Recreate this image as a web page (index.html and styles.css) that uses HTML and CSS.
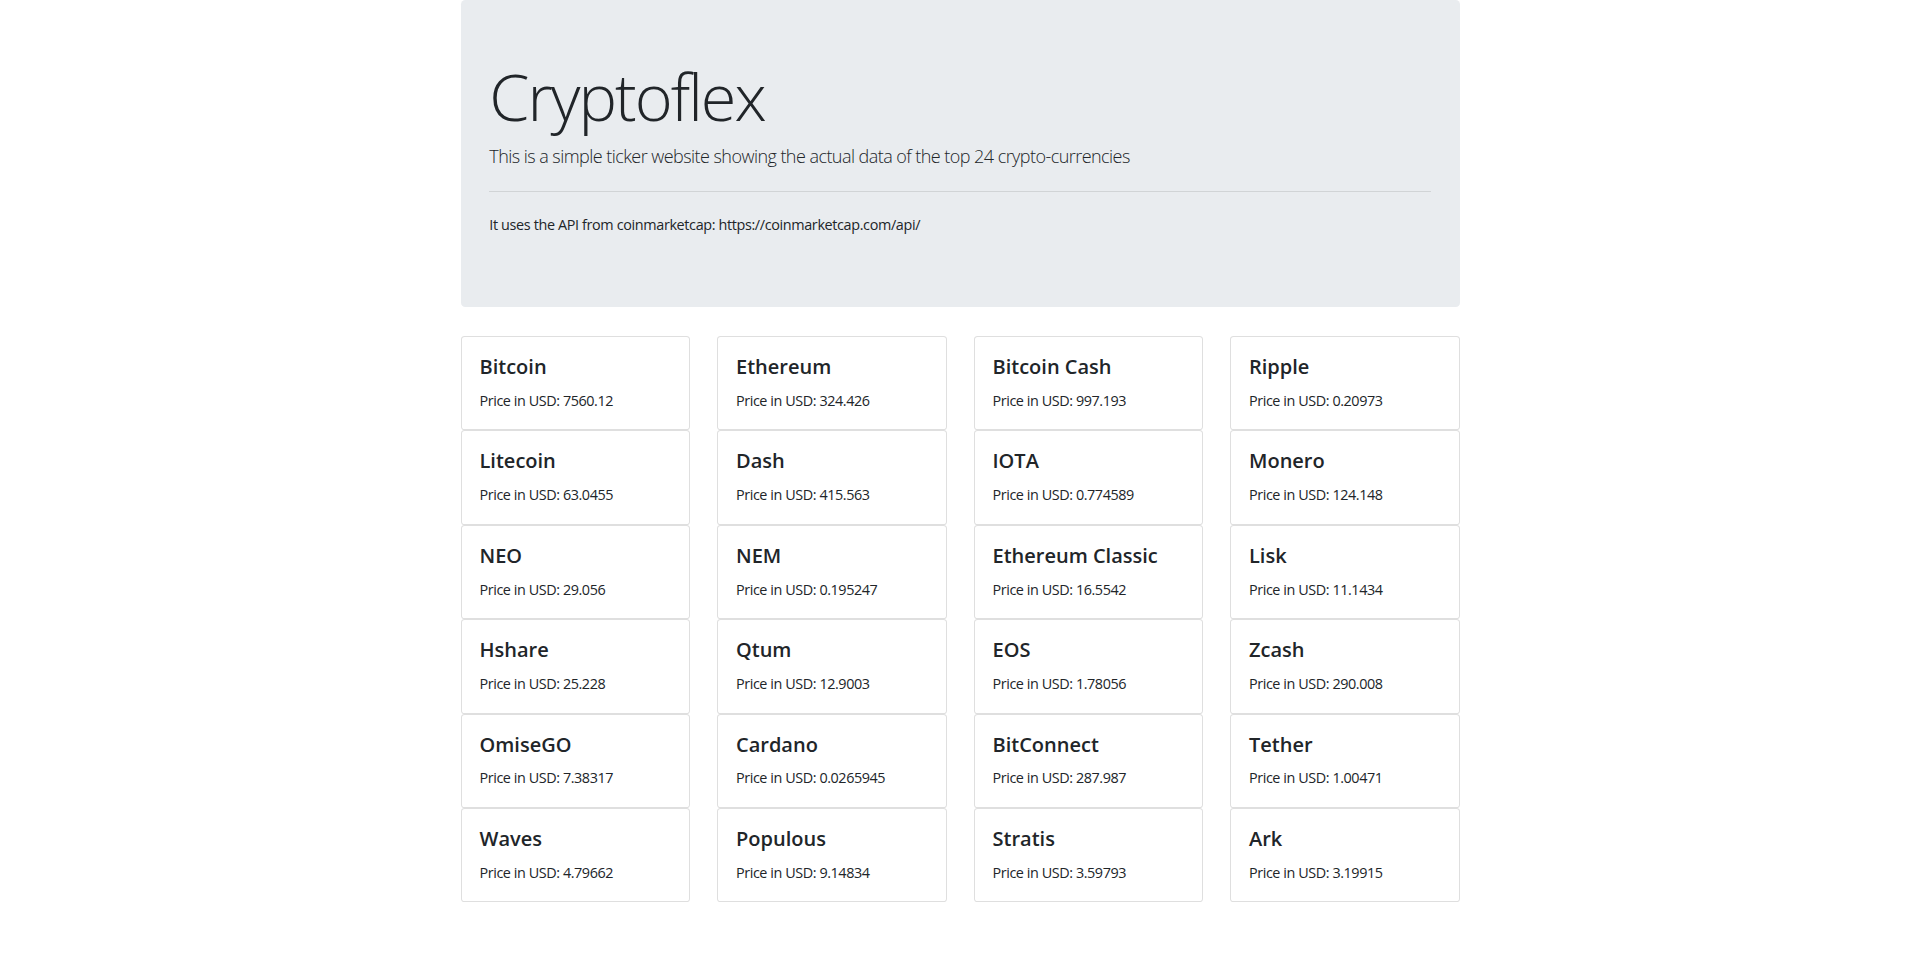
FILE: index.html
```html
<!DOCTYPE html>
<html lang="en">
<head>
<meta charset="utf-8">
<title>Cryptoflex</title>
<link rel="stylesheet" href="styles.css">
</head>
<body>
<div class="container">
  <header class="jumbotron">
    <h1 class="display">Cryptoflex</h1>
    <p class="lead">This is a simple ticker website showing the actual data of the top 24 crypto-currencies</p>
    <hr class="divider">
    <p class="note">It uses the API from coinmarketcap: https://coinmarketcap.com/api/</p>
  </header>
  <main class="grid">
    <div class="card"><h5 class="card-title">Bitcoin</h5><p class="card-text">Price in USD: 7560.12</p></div>
    <div class="card"><h5 class="card-title">Ethereum</h5><p class="card-text">Price in USD: 324.426</p></div>
    <div class="card"><h5 class="card-title">Bitcoin Cash</h5><p class="card-text">Price in USD: 997.193</p></div>
    <div class="card"><h5 class="card-title">Ripple</h5><p class="card-text">Price in USD: 0.20973</p></div>
    <div class="card"><h5 class="card-title">Litecoin</h5><p class="card-text">Price in USD: 63.0455</p></div>
    <div class="card"><h5 class="card-title">Dash</h5><p class="card-text">Price in USD: 415.563</p></div>
    <div class="card"><h5 class="card-title">IOTA</h5><p class="card-text">Price in USD: 0.774589</p></div>
    <div class="card"><h5 class="card-title">Monero</h5><p class="card-text">Price in USD: 124.148</p></div>
    <div class="card"><h5 class="card-title">NEO</h5><p class="card-text">Price in USD: 29.056</p></div>
    <div class="card"><h5 class="card-title">NEM</h5><p class="card-text">Price in USD: 0.195247</p></div>
    <div class="card"><h5 class="card-title">Ethereum Classic</h5><p class="card-text">Price in USD: 16.5542</p></div>
    <div class="card"><h5 class="card-title">Lisk</h5><p class="card-text">Price in USD: 11.1434</p></div>
    <div class="card"><h5 class="card-title">Hshare</h5><p class="card-text">Price in USD: 25.228</p></div>
    <div class="card"><h5 class="card-title">Qtum</h5><p class="card-text">Price in USD: 12.9003</p></div>
    <div class="card"><h5 class="card-title">EOS</h5><p class="card-text">Price in USD: 1.78056</p></div>
    <div class="card"><h5 class="card-title">Zcash</h5><p class="card-text">Price in USD: 290.008</p></div>
    <div class="card"><h5 class="card-title">OmiseGO</h5><p class="card-text">Price in USD: 7.38317</p></div>
    <div class="card"><h5 class="card-title">Cardano</h5><p class="card-text">Price in USD: 0.0265945</p></div>
    <div class="card"><h5 class="card-title">BitConnect</h5><p class="card-text">Price in USD: 287.987</p></div>
    <div class="card"><h5 class="card-title">Tether</h5><p class="card-text">Price in USD: 1.00471</p></div>
    <div class="card"><h5 class="card-title">Waves</h5><p class="card-text">Price in USD: 4.79662</p></div>
    <div class="card"><h5 class="card-title">Populous</h5><p class="card-text">Price in USD: 9.14834</p></div>
    <div class="card"><h5 class="card-title">Stratis</h5><p class="card-text">Price in USD: 3.59793</p></div>
    <div class="card"><h5 class="card-title">Ark</h5><p class="card-text">Price in USD: 3.19915</p></div>
  </main>
</div>
</body>
</html>
```

FILE: styles.css
```css
* { box-sizing: border-box; }
html, body { margin: 0; padding: 0; background: #fff; }
body {
  font-family: "Open Sans", "Noto Sans", sans-serif;
  font-size: 14.4px;
  line-height: 1.5;
  color: #212529;
}
.container {
  width: 999px;
  margin: 0 auto;
}
.jumbotron {
  background: #e9ecef;
  border-radius: 4.3px;
  padding: 57.6px 28.8px;
  margin-bottom: 28.8px;
}
.display {
  font-size: 64.8px;
  font-weight: 300;
  line-height: 1.2;
  letter-spacing: -2px;
  margin: 0 0 7.2px;
}
.lead {
  font-size: 18px;
  font-weight: 300;
  line-height: 1.5;
  letter-spacing: -0.55px;
  margin: 0;
}
.divider {
  border: 0;
  border-top: 1px solid rgba(0,0,0,.1);
  margin: 21.6px 0;
  height: 0;
}
.note {
  margin: 0 0 14.4px;
  line-height: 21.6px;
  letter-spacing: -0.36px;
}
.grid {
  display: grid;
  grid-template-columns: repeat(4, 1fr);
  column-gap: 27px;
}
.card {
  border: 1px solid rgba(0,0,0,.125);
  border-radius: 3.6px;
  padding: 18px;
  background: #fff;
}
.card-title {
  font-size: 20px;
  font-weight: 600;
  line-height: 1.2;
  margin: 0 0 10.8px;
}
.card-text {
  margin: 0;
  line-height: 21.6px;
  letter-spacing: -0.43px;
}
```
